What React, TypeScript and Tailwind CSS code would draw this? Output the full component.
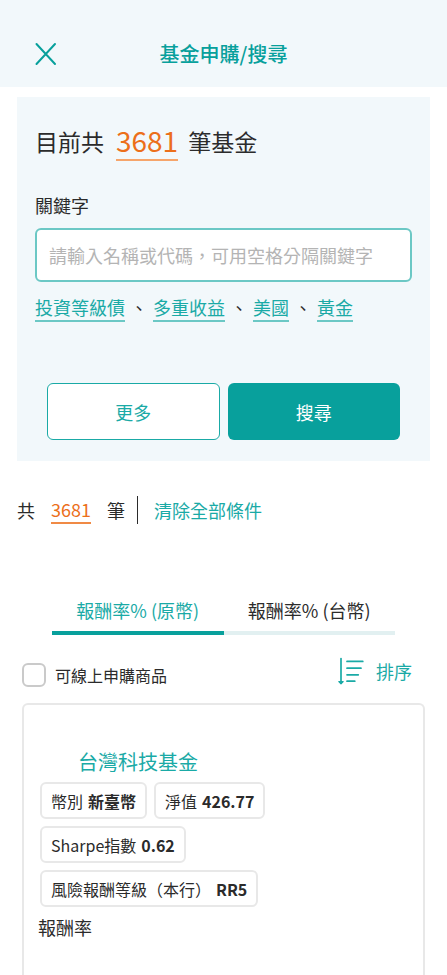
import { useState } from 'react'

const KEYWORDS = ['投資等級債', '多重收益', '美國', '黃金']

const TABS = [
  { id: 'original', label: '報酬率% (原幣)' },
  { id: 'twd', label: '報酬率% (台幣)' },
]

const FUND = {
  name: '台灣科技基金',
  tags: [
    { label: '幣別', value: '新臺幣' },
    { label: '淨值', value: '426.77' },
    { label: 'Sharpe指數', value: '0.62' },
    { label: '風險報酬等級（本行）', value: 'RR5' },
  ],
}

function CloseIcon() {
  return (
    <svg width="22" height="24" viewBox="0 0 22 24" fill="none" stroke="currentColor" strokeWidth="2" strokeLinecap="round">
      <path d="M1.500 2 20 22M20 2 1.500 22" />
    </svg>
  )
}

function SortIcon() {
  return (
    <svg width="26" height="28" viewBox="0 0 26 28" fill="none" stroke="currentColor" strokeWidth="1.7" strokeLinecap="round">
      <path d="M3 1.500V25" />
      <path d="M0.800 24.600h4.400L3 26.800Z" fill="currentColor" strokeWidth="1.200" strokeLinejoin="round" />
      <path d="M9 4.400h15.800M9 11.200h14M9 17.800h11.300M9 24.200h7.800" />
    </svg>
  )
}

function SearchPanel() {
  const [keyword, setKeyword] = useState('')

  return (
    <section className="mx-[17px] mt-2.5 bg-[#f2f8fb] px-[18px] pt-6 pb-[21px]">
      <h2 className="flex items-center text-[23px] leading-10">
        目前共
        <span className="mr-2.5 ml-3 border-b-2 border-[#f6a56b] text-[28px] leading-[38px] text-[#ec6f1a]">3681</span>
        筆基金
      </h2>

      <label htmlFor="keyword" className="mt-[34px] block text-lg leading-5">
        關鍵字
      </label>
      <input
        id="keyword"
        type="text"
        value={keyword}
        onChange={(e) => setKeyword(e.target.value)}
        placeholder="請輸入名稱或代碼，可用空格分隔關鍵字"
        className="mt-[13px] h-[54px] w-full rounded-md border-2 border-[#6cc8c5] bg-white px-3 text-lg outline-none placeholder:text-[#b4b4b4]"
      />

      <ul className="mt-3 flex flex-wrap text-lg leading-[26px]">
        {KEYWORDS.map((word, i) => (
          <li key={word} className="flex">
            {i > 0 && <span className="mx-[5px]">、</span>}
            <a href="#keyword" className="border-b-2 border-[#6cc8c5] text-[#1aaaa6]">
              {word}
            </a>
          </li>
        ))}
      </ul>

      <div className="mt-[61px] grid grid-cols-2 gap-2 px-3 text-lg">
        <button type="button" className="h-[57px] rounded-md border border-[#1aaaa6] bg-white text-[#1aaaa6]">
          更多
        </button>
        <button type="button" className="h-[57px] rounded-md bg-[#08a09c] text-white">
          搜尋
        </button>
      </div>
    </section>
  )
}

function FundCard() {
  return (
    <article className="mx-[22px] mt-4 flex-1 rounded-t-md border-2 border-b-0 border-[#e8e8e8] px-[14px] pt-[43px]">
      <h3 className="pl-10 text-xl leading-7">
        <a href="#fund" className="text-[#1aaaa6]">{FUND.name}</a>
      </h3>
      <div className="mx-0.5 mt-1.5 flex flex-wrap gap-[7px]">
        {FUND.tags.map((tag) => (
          <span key={tag.label} className="flex h-[37px] items-center gap-[5px] rounded-md border-2 border-[#e8e8e8] px-[9px] text-base">
            {tag.label}
            <b className="font-bold">{tag.value}</b>
          </span>
        ))}
      </div>
      <p className="mt-2 text-lg leading-6">報酬率</p>
    </article>
  )
}

export default function App() {
  const [tab, setTab] = useState('original')
  const [onlineOnly, setOnlineOnly] = useState(false)

  return (
    <div className="flex min-h-screen flex-col bg-white font-['Noto_Sans_CJK_TC',sans-serif] text-[#2b2b2b]">
      <header className="grid h-[87px] grid-cols-[1fr_auto_1fr] items-center bg-[#f2f8fb] px-[35px] pt-5 text-[#08a09c]">
        <button type="button" aria-label="關閉" className="w-[22px]">
          <CloseIcon />
        </button>
        <h1 className="text-xl font-medium">基金申購/搜尋</h1>
      </header>

      <SearchPanel />

      <div className="mx-[17px] mt-[35px] flex h-7 items-center text-lg">
        共
        <span className="mx-4 border-b-2 border-[#f08a45] leading-[26px] text-[#ec6f1a]">3681</span>
        筆
        <button type="button" className="ml-3 border-l border-[#2b2b2b] pl-4 leading-7 text-[#1aaaa6]">
          清除全部條件
        </button>
      </div>

      <div role="tablist" className="mx-[52px] mt-[71px] grid grid-cols-2 text-lg">
        {TABS.map((t) => (
          <button
            key={t.id}
            type="button"
            role="tab"
            aria-selected={tab === t.id}
            onClick={() => setTab(t.id)}
            className={
              tab === t.id
                ? 'border-b-4 border-[#08a09c] pb-1.5 leading-[30px] text-[#1aaaa6]'
                : 'border-b-4 border-[#e2f0f1] pb-1.5 leading-[30px]'
            }
          >
            {t.label}
          </button>
        ))}
      </div>

      <div className="mx-[22px] mt-[22px] flex items-start justify-between pr-[13px]">
        <label className="flex items-center gap-[9px] pt-1.5 text-base">
          <input
            type="checkbox"
            checked={onlineOnly}
            onChange={(e) => setOnlineOnly(e.target.checked)}
            className="h-6 w-6 appearance-none rounded-md border-2 border-[#cacaca] bg-white checked:bg-[#08a09c]"
          />
          可線上申購商品
        </label>
        <button type="button" className="flex items-center gap-3 text-lg text-[#1aaaa6]">
          <SortIcon />
          排序
        </button>
      </div>

      <FundCard />
    </div>
  )
}
